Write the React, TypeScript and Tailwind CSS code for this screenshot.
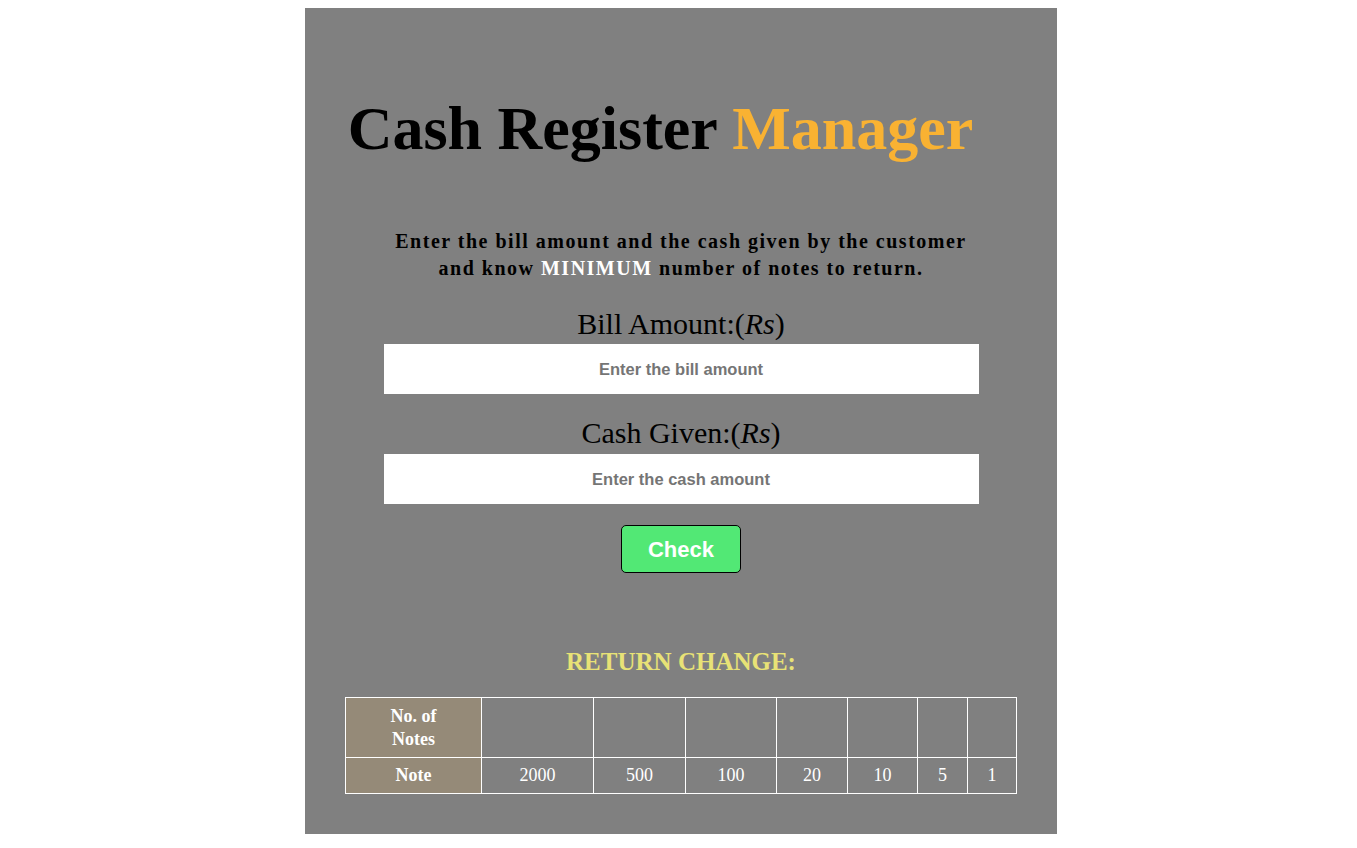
const serif = { fontFamily: '"Liberation Serif", "Times New Roman", serif' };

const notes = ["2000", "500", "100", "20", "10", "5", "1"];
const colWidths = ["w-[112px]", "w-[92px]", "w-[91px]", "w-[71px]", "w-[70px]", "w-[50px]", "w-[49px]"];

export default function App() {
  return (
    <div className="min-h-screen bg-white flex items-start justify-center pt-2 pl-[5px]" style={serif}>
      <div className="w-[752px] bg-[#808080] flex flex-col items-center pt-[83px] pb-[40px]">
        <h1 className="text-[62px] leading-[74px] font-bold text-black pr-[41px] font-['Liberation_Serif',serif]">
          Cash Register <span className="text-[#f9b232]">Manager</span>
        </h1>

        <p className="mt-[63px] text-center text-[20px] leading-[27px] font-bold tracking-[1.5px] text-black font-['Liberation_Serif',serif]">
          Enter the bill amount and the cash given by the customer
          <br />
          and know <span className="text-white">MINIMUM</span> number of notes to return.
        </p>

        <label className="mt-[26px] text-[30px] leading-[32px] text-black font-['Liberation_Serif',serif]">
          Bill Amount:(<i>Rs</i>)
        </label>
        <input
          className="mt-[4px] w-[595px] h-[50px] bg-white text-center text-[16.5px] font-bold font-['Liberation_Sans',Arial,sans-serif] placeholder:text-[#757575] outline-none"
          placeholder="Enter the bill amount"
        />

        <label className="mt-[23px] text-[30px] leading-[32px] text-black font-['Liberation_Serif',serif]">
          Cash Given:(<i>Rs</i>)
        </label>
        <input
          className="mt-[5px] w-[595px] h-[50px] bg-white text-center text-[16.5px] font-bold font-['Liberation_Sans',Arial,sans-serif] placeholder:text-[#757575] outline-none"
          placeholder="Enter the cash amount"
        />

        <button className="mt-[21px] w-[120px] h-[48px] bg-[#52e875] border border-black rounded-[5px] text-white text-[22px] font-bold font-['Liberation_Sans',Arial,sans-serif]">
          Check
        </button>

        <h2 className="mt-[75px] text-[25px] leading-[28px] font-bold text-[#e8e276] font-['Liberation_Serif',serif]">
          RETURN CHANGE:
        </h2>

        <table className="mt-[21px] border-collapse text-white text-[18px] font-['Liberation_Serif',serif]">
          <tbody>
            <tr className="h-[60px]">
              <th className="w-[136px] bg-[#958a78] border border-white font-bold leading-[23px]">
                No. of
                <br />
                Notes
              </th>
              {colWidths.map((w, i) => (
                <td key={i} className={`${w} border border-white`}></td>
              ))}
            </tr>
            <tr className="h-[36px]">
              <th className="bg-[#958a78] border border-white font-bold">Note</th>
              {notes.map((n, i) => (
                <td key={n} className={`${colWidths[i]} border border-white text-center`}>
                  {n}
                </td>
              ))}
            </tr>
          </tbody>
        </table>
      </div>
    </div>
  );
}
